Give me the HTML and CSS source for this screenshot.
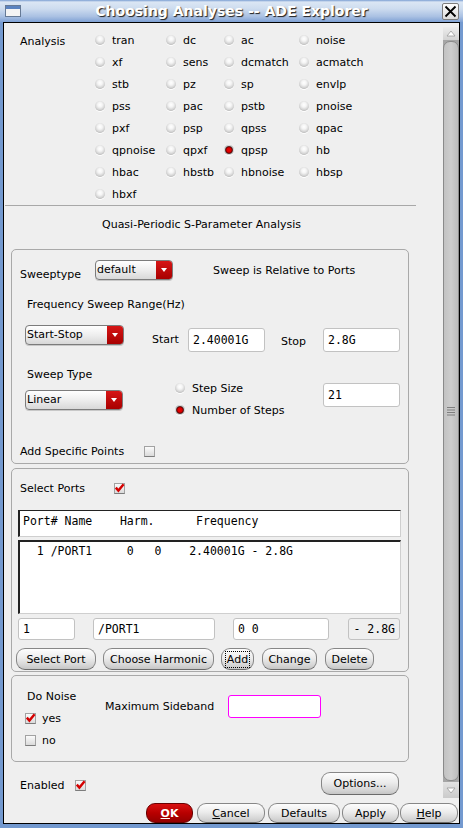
FILE: index.html
```html
<!DOCTYPE html>
<html>
<head>
<meta charset="utf-8">
<title>Choosing Analyses -- ADE Explorer</title>
<link rel="stylesheet" href="styles.css">
</head>
<body>
<div class="frame">
  <div class="titlebar">
    <span class="winicon"></span>
    <span class="title">Choosing Analyses -- ADE Explorer</span>
    <span class="close"><svg width="13" height="13" viewBox="0 0 13 13"><path d="M1.5 1.5 L11.5 11.5 M11.5 1.5 L1.5 11.5" stroke="#000" stroke-width="1.8" fill="none"/></svg></span>
  </div>
  <div class="client">
    <div class="scrollarea">
      <div class="content">
        <div class="analysis">
          <div class="an-label">Analysis</div>
          <div class="an-grid">
            <div class="opt"><span class="radio"></span><span class="lbl">tran</span></div>
            <div class="opt"><span class="radio"></span><span class="lbl">dc</span></div>
            <div class="opt"><span class="radio"></span><span class="lbl">ac</span></div>
            <div class="opt"><span class="radio"></span><span class="lbl">noise</span></div>
            <div class="opt"><span class="radio"></span><span class="lbl">xf</span></div>
            <div class="opt"><span class="radio"></span><span class="lbl">sens</span></div>
            <div class="opt"><span class="radio"></span><span class="lbl">dcmatch</span></div>
            <div class="opt"><span class="radio"></span><span class="lbl">acmatch</span></div>
            <div class="opt"><span class="radio"></span><span class="lbl">stb</span></div>
            <div class="opt"><span class="radio"></span><span class="lbl">pz</span></div>
            <div class="opt"><span class="radio"></span><span class="lbl">sp</span></div>
            <div class="opt"><span class="radio"></span><span class="lbl">envlp</span></div>
            <div class="opt"><span class="radio"></span><span class="lbl">pss</span></div>
            <div class="opt"><span class="radio"></span><span class="lbl">pac</span></div>
            <div class="opt"><span class="radio"></span><span class="lbl">pstb</span></div>
            <div class="opt"><span class="radio"></span><span class="lbl">pnoise</span></div>
            <div class="opt"><span class="radio"></span><span class="lbl">pxf</span></div>
            <div class="opt"><span class="radio"></span><span class="lbl">psp</span></div>
            <div class="opt"><span class="radio"></span><span class="lbl">qpss</span></div>
            <div class="opt"><span class="radio"></span><span class="lbl">qpac</span></div>
            <div class="opt"><span class="radio"></span><span class="lbl">qpnoise</span></div>
            <div class="opt"><span class="radio"></span><span class="lbl">qpxf</span></div>
            <div class="opt"><span class="radio on"></span><span class="lbl">qpsp</span></div>
            <div class="opt"><span class="radio"></span><span class="lbl">hb</span></div>
            <div class="opt"><span class="radio"></span><span class="lbl">hbac</span></div>
            <div class="opt"><span class="radio"></span><span class="lbl">hbstb</span></div>
            <div class="opt"><span class="radio"></span><span class="lbl">hbnoise</span></div>
            <div class="opt"><span class="radio"></span><span class="lbl">hbsp</span></div>
            <div class="opt"><span class="radio"></span><span class="lbl">hbxf</span></div>
          </div>
        </div>
        <div class="sep"></div>
        <div class="formtitle">Quasi-Periodic S-Parameter Analysis</div>

        <div class="box box1">
          <div class="r-sweeptype">
            <span class="st-lbl">Sweeptype</span>
            <span class="dd dd-default"><span class="val">default</span><span class="arrow"><i class="tri"></i></span></span>
            <span class="st-rel">Sweep is Relative to Ports</span>
          </div>
          <div class="r-freqlabel">Frequency Sweep Range(Hz)</div>
          <div class="r-startstop">
            <span class="dd dd-range"><span class="val">Start-Stop</span><span class="arrow"><i class="tri"></i></span></span>
            <span class="start-lbl">Start</span>
            <span class="tf tf-mid">2.40001G</span>
            <span class="stop-lbl">Stop</span>
            <span class="tf tf-mid">2.8G</span>
          </div>
          <div class="r-sweeptype2">
            <div class="col-left">
              <div class="swt-lbl">Sweep Type</div>
              <span class="dd dd-linear"><span class="val">Linear</span><span class="arrow"><i class="tri"></i></span></span>
            </div>
            <div class="col-mid">
              <div class="opt2"><span class="radio"></span><span class="lbl">Step Size</span></div>
              <div class="opt2"><span class="radio on"></span><span class="lbl">Number of Steps</span></div>
            </div>
            <span class="tf tf-mid tf-steps">21</span>
          </div>
          <div class="r-addpoints">
            <span class="ap-lbl">Add Specific Points</span>
            <span class="cb"></span>
          </div>
        </div>

        <div class="box box2">
          <div class="r-selports">
            <span class="sp-lbl">Select Ports</span>
            <span class="cb on"><svg width="11" height="11" viewBox="0 0 11 11"><path d="M1.8 4.6 L4.4 7.6 L9.6 1.2" stroke="#d40000" stroke-width="2.4" fill="none" stroke-linejoin="miter"/></svg></span>
          </div>
          <div class="table-head">Port# Name    Harm.      Frequency</div>
          <div class="table-list">  1 /PORT1     0   0    2.40001G - 2.8G</div>
          <div class="r-fields">
            <span class="tf tf-small f1">1</span>
            <span class="tf tf-small f2">/PORT1</span>
            <span class="tf tf-small f3">0 0</span>
            <span class="tf tf-small f4">- 2.8G</span>
          </div>
          <div class="r-portbtns">
            <span class="btn b-selport">Select Port</span>
            <span class="btn b-harm">Choose Harmonic</span>
            <span class="btn b-add"><span class="focus">Add</span></span>
            <span class="btn b-change">Change</span>
            <span class="btn b-delete">Delete</span>
          </div>
        </div>

        <div class="box box3">
          <div class="noise-col">
            <div class="dn-lbl">Do Noise</div>
            <div class="cbrow"><span class="cb on"><svg width="11" height="11" viewBox="0 0 11 11"><path d="M1.8 4.6 L4.4 7.6 L9.6 1.2" stroke="#d40000" stroke-width="2.4" fill="none"/></svg></span><span class="cblbl">yes</span></div>
            <div class="cbrow"><span class="cb"></span><span class="cblbl">no</span></div>
          </div>
          <span class="ms-lbl">Maximum Sideband</span>
          <span class="tf tf-magenta"></span>
        </div>

        <div class="r-enabled">
          <span class="en-lbl">Enabled</span>
          <span class="cb on en-cb"><svg width="11" height="11" viewBox="0 0 11 11"><path d="M1.8 4.6 L4.4 7.6 L9.6 1.2" stroke="#d40000" stroke-width="2.4" fill="none"/></svg></span>
          <span class="btn b-options">Options...</span>
        </div>
      </div>
      <div class="scrollbar">
        <div class="sb-up"><svg width="10" height="7" viewBox="0 0 10 7"><path d="M1 6 L5 1 L9 6 Z" fill="#fff" stroke="#9a9a9a" stroke-width="0.8"/></svg></div>
        <div class="sb-thumb"><svg width="8" height="10" viewBox="0 0 8 10"><path d="M0 1.5H8M0 4H8M0 6.5H8M0 9H8" stroke="#7e7e7e" stroke-width="1"/></svg></div>
        <div class="sb-down"><svg width="10" height="7" viewBox="0 0 10 7"><path d="M1 1 L5 6 L9 1 Z" fill="#fff" stroke="#9a9a9a" stroke-width="0.8"/></svg></div>
      </div>
    </div>
    <div class="dlgbuttons">
      <span class="btn dbtn ok"><u>O</u>K</span>
      <span class="btn dbtn cancel"><u>C</u>ancel</span>
      <span class="btn dbtn defaults">Defaults</span>
      <span class="btn dbtn apply">Apply</span>
      <span class="btn dbtn help"><u>H</u>elp</span>
    </div>
  </div>
</div>
</body>
</html>
```

FILE: styles.css
```css
* { box-sizing: border-box; }
html, body { margin: 0; padding: 0; }
body {
  width: 463px;
  height: 828px;
  overflow: hidden;
  background: #7399cf;
  font-family: "DejaVu Sans", sans-serif;
  font-size: 11px;
  line-height: 13px;
  color: #000;
}
.frame { width: 463px; height: 828px; display: flex; flex-direction: column; }

/* title bar */
.titlebar {
  height: 22px;
  display: flex;
  padding: 0 4px 0 5px;
  background: linear-gradient(#7b9fd2 0, #dbe6f4 2px, #cddcef 40%, #aac1e3 75%, #7fa1d4 100%);
}
.winicon {
  width: 16px; height: 12px; margin-top: 5px;
  border: 1px solid #667a96;
  background: linear-gradient(#5b83c0 0, #5b83c0 3px, #f4f4f4 3px);
}
.title {
  flex: 1;
  text-align: center;
  font-weight: bold;
  font-size: 14px;
  line-height: 22px;
  color: #fff;
  text-shadow: 1px 1px 1px #1e1e1e;
}
.close {
  width: 17px; height: 17px; margin-top: 3px;
  border: 1px solid #7d7d7d; border-radius: 2px;
  background: linear-gradient(#fdfdfd, #dcdcdc);
  display: flex; align-items: center; justify-content: center;
}

/* client */
.client {
  margin: 0 3px;
  height: 802px;
  border: 1px solid #000;
  background: #efefef;
  display: flex; flex-direction: column;
}
.scrollarea { height: 775px; display: flex; }
.content { width: 439px; }

/* analysis grid */
.analysis { display: flex; padding-top: 6px; height: 182px; }
.an-label { width: 75px; margin-left: 16px; padding-top: 6px; }
.an-grid {
  display: grid;
  grid-template-columns: 71px 58px 75px 80px;
  grid-auto-rows: 22px;
}
.opt, .opt2 { display: flex; align-items: center; }
.opt .lbl, .opt2 .lbl { margin-left: 7px; }

.radio {
  width: 10px; height: 10px; border-radius: 50%;
  flex: none;
  background: radial-gradient(circle at 50% 38%, #ffffff 0, #f4f4f4 30%, #d2d2d2 62%, #a4a4a4 88%, #8e8e8e 100%);
  box-shadow: 0 1px 0 #ffffff;
}
.radio.on {
  background: radial-gradient(circle at 50% 50%, #f40000 0, #d80000 2.2px, #5a0000 3.3px, #8a8a8a 4px, #dedede 4.6px, #a8a8a8 5px);
}

.sep { height: 1px; margin-left: 1px; width: 411px; background: #a8a8a8; }
.formtitle { padding: 12px 0 18px 98px; }

/* group boxes */
.box {
  margin-left: 7px;
  width: 398px;
  border: 1px solid #a9a9a9;
  border-radius: 5px;
}
.box1 { height: 215px; }
.box2 { height: 204px; margin-top: 4px; }
.box3 { height: 87px; margin-top: 3px; display: flex; align-items: flex-start; }

/* dropdown */
.dd {
  display: flex; height: 20px;
  border: 1px solid #7c7c7c; border-radius: 4px;
  overflow: hidden;
  background: linear-gradient(#ffffff, #eeeeee 50%, #d8d8d8);
  box-shadow: 0 1px 0 #c8c8c8;
}
.dd .val { flex: 1; padding-left: 1px; line-height: 18px; }
.dd .arrow {
  width: 16px;
  background: linear-gradient(#d61616, #a80000);
  display: flex; align-items: center; justify-content: center;
}
.tri {
  display: block; width: 0; height: 0;
  border-left: 3.5px solid transparent;
  border-right: 3.5px solid transparent;
  border-top: 4px solid #fff;
}
.dd-default { width: 78px; }
.dd-range { width: 99px; margin-left: 13px; }
.dd-linear { width: 98px; margin-top: 9px; }

/* text fields */
.tf {
  display: block;
  background: #fff;
  border: 1px solid #c2c2c2;
  border-radius: 3px;
  font-family: "DejaVu Sans Mono", monospace;
  font-size: 11.5px;
  white-space: pre;
  padding-left: 4px;
}
.tf-mid { width: 77px; height: 24px; line-height: 23px; margin-top: 3px; }

/* box1 rows */
.r-sweeptype { display: flex; align-items: flex-start; margin-top: 10px; height: 22px; }
.st-lbl { width: 75px; margin-left: 8px; padding-top: 8px; }
.st-rel { margin-left: 40px; padding-top: 4px; }
.r-freqlabel { margin-top: 16px; margin-left: 15px; height: 13px; }
.r-startstop { display: flex; align-items: flex-start; margin-top: 14px; height: 27px; }
.start-lbl { margin-left: 28px; width: 36px; padding-top: 8px; }
.stop-lbl { margin-left: 16px; width: 42px; padding-top: 10px; }
.r-sweeptype2 { display: flex; align-items: flex-start; margin-top: 10px; height: 59px; }
.col-left { margin-left: 13px; width: 150px; }
.swt-lbl { margin-left: 2px; padding-top: 6px; height: 19px; }
.col-mid { width: 148px; padding-top: 15px; }
.opt2 { height: 22px; }
.tf-steps { margin-top: 21px; }
.r-addpoints { display: flex; align-items: center; margin-top: 24px; height: 13px; }
.ap-lbl { margin-left: 8px; width: 124px; }

/* checkbox */
.cb {
  display: flex; align-items: center; justify-content: center;
  width: 11px; height: 11px; flex: none;
  border: 1px solid #a2a2a2;
  border-bottom-color: #7c7c7c;
  background: linear-gradient(#fbfbfb, #dadada);
}
.cb svg { margin: -1px; }

/* box2 */
.r-selports { display: flex; align-items: center; margin-top: 13px; height: 13px; }
.sp-lbl { margin-left: 8px; width: 94px; }
.table-head, .table-list {
  margin-left: 6px;
  width: 383px;
  background: #fff;
  font-family: "DejaVu Sans Mono", monospace;
  font-size: 11.5px;
  white-space: pre;
  padding-left: 3px;
  border-right: 1px solid #cfcfcf;
  border-bottom: 1px solid #cfcfcf;
}
.table-head {
  margin-top: 15px;
  height: 27px;
  padding-top: 4px;
  border-top: 1px solid #222;
  border-left: 2px solid #222;
}
.table-list {
  margin-top: 3px;
  height: 74px;
  padding-top: 3px;
  border-top: 2px solid #222;
  border-left: 2px solid #222;
}
.r-fields { display: flex; margin-top: 4px; height: 22px; }
.tf-small { height: 22px; line-height: 21px; }
.f1 { margin-left: 6px; width: 57px; }
.f2 { margin-left: 18px; width: 122px; }
.f3 { margin-left: 18px; width: 96px; }
.f4 { margin-left: 19px; width: 52px; background: #efefef; text-align: right; padding-left: 0; padding-right: 4px; }

/* buttons */
.btn {
  display: flex; align-items: center; justify-content: center;
  height: 22px;
  border: 1px solid #878787;
  border-bottom-color: #6a6a6a;
  border-radius: 9px;
  background: linear-gradient(#fdfdfd, #ececec 45%, #d6d6d6 80%, #c6c6c6);
  white-space: nowrap;
}
.r-portbtns { display: flex; margin-top: 8px; }
.b-selport { margin-left: 4px; width: 80px; }
.b-harm { margin-left: 7px; width: 111px; }
.b-add { margin-left: 7px; width: 33px; }
.b-change { margin-left: 8px; width: 55px; }
.b-delete { margin-left: 8px; width: 49px; }
.focus { border: 1px dotted #000; padding: 0 1px; line-height: 15px; }

/* box3 */
.noise-col { margin-left: 13px; width: 80px; }
.dn-lbl { margin-left: 2px; margin-top: 14px; }
.cbrow { display: flex; align-items: center; height: 22px; }
.dn-lbl + .cbrow { margin-top: 4px; }
.cblbl { margin-left: 6px; }
.ms-lbl { margin-top: 24px; width: 123px; }
.tf-magenta { margin-top: 19px; width: 93px; height: 23px; border: 1px solid #ff00ff; }

/* enabled row */
.r-enabled { display: flex; align-items: flex-start; margin-top: 10px; height: 23px; }
.en-lbl { margin-left: 16px; width: 55px; padding-top: 7px; }
.en-cb { margin-top: 8px; }
.b-options { margin-left: 235px; width: 78px; height: 23px; }

/* scrollbar */
.scrollbar {
  width: 16px; height: 771px; margin-top: 4px;
  display: flex; flex-direction: column;
  background: #a6a6a6;
}
.sb-up {
  height: 13px;
  background: linear-gradient(#ececec, #d2d2d2);
  display: flex; align-items: center; justify-content: center;
}
.sb-thumb {
  flex: 1;
  margin: 1px 0;
  border: 1px solid #8a8a8a;
  border-radius: 7px;
  background: linear-gradient(90deg, #c2c2c2, #cdcdcd 50%, #bcbcbc);
  display: flex; align-items: center; justify-content: center;
}
.sb-down {
  height: 16px;
  background: linear-gradient(#e2e2e2, #cacaca);
  display: flex; align-items: center; justify-content: center;
}

/* dialog buttons */
.dlgbuttons {
  height: 25px;
  padding: 5px 1px 0 0;
  display: flex; justify-content: flex-end;
}
.dbtn { height: 20px; }
.dbtn u { text-decoration: underline; }
.ok {
  width: 47px;
  background: linear-gradient(#d81010, #b80000 50%, #940000);
  border-color: #6a0000;
  color: #fff;
  font-weight: bold;
}
.cancel { width: 68px; margin-left: 4px; }
.defaults { width: 72px; margin-left: 3px; }
.apply { width: 57px; margin-left: 2px; }
.help { width: 58px; margin-left: 1px; }
```
